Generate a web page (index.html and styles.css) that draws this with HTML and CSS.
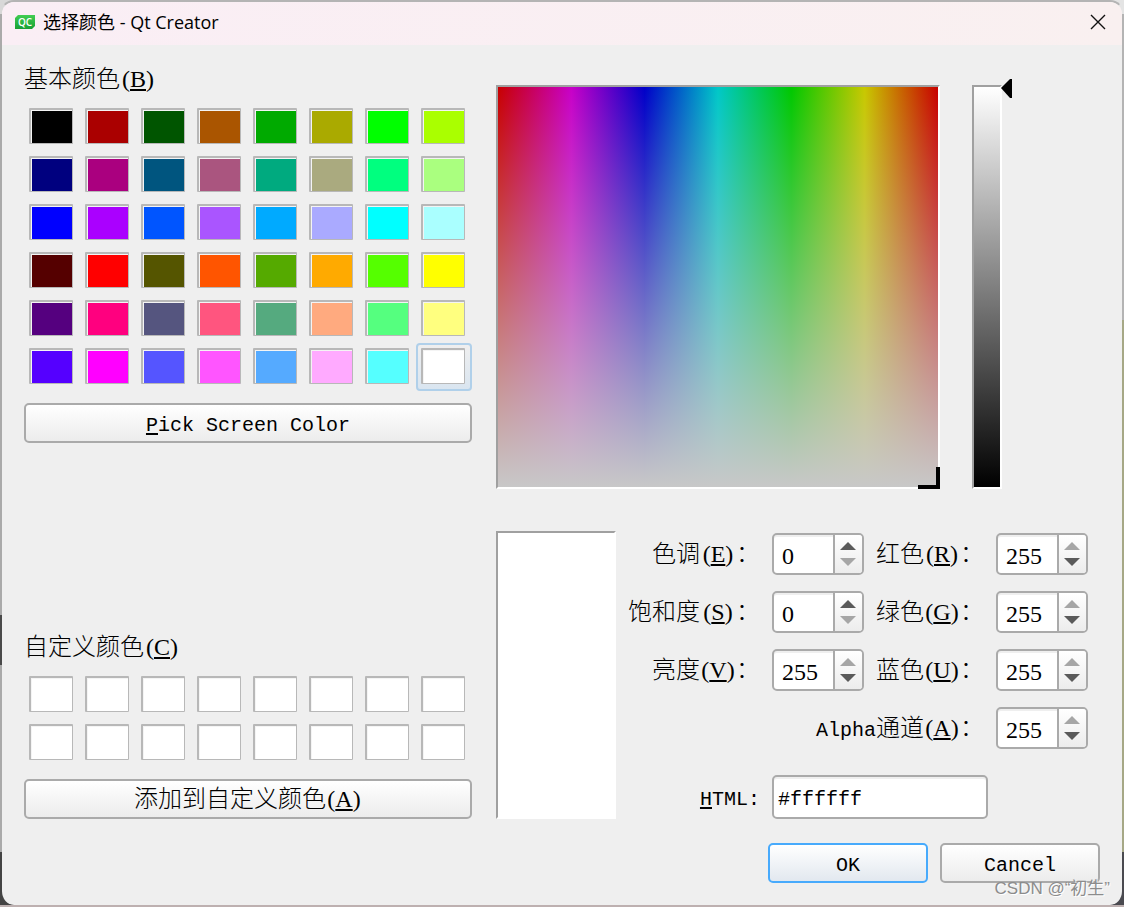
FILE: index.html
```
<!DOCTYPE html>
<html lang="zh-CN">
<head>
<meta charset="utf-8">
<title>选择颜色 - Qt Creator</title>
<link rel="stylesheet" href="styles.css">
</head>
<body>
<div class="dialog" role="dialog" aria-labelledby="dialog-title">
  <header class="titlebar">
    <svg class="app-icon" viewBox="0 0 20 14" aria-hidden="true">
      <defs><linearGradient id="g" x1="0" y1="0" x2="0" y2="1"><stop offset="0" stop-color="#41cd52"/><stop offset="1" stop-color="#17a035"/></linearGradient></defs>
      <path d="M3 0H20V11L17 14H0V3Z" fill="url(#g)"/>
      <text x="10" y="11" text-anchor="middle" class="app-icon-text">QC</text>
    </svg>
    <h1 class="title" id="dialog-title">选择颜色 - Qt Creator</h1>
    <button class="close" type="button" aria-label="Close">
      <svg viewBox="0 0 16 16" aria-hidden="true"><path d="M1 1L15 15M15 1L1 15" stroke="#111" stroke-width="1.4" fill="none"/></svg>
    </button>
  </header>
  <main class="content">
    <section class="palette">
      <h2 class="heading">基本颜色<span class="key">(<u>B</u>)</span></h2>
      <div class="swatches">
        <button class="cell" type="button" aria-label="#000000"><span class="swatch" style="background:#000000"></span></button>
        <button class="cell" type="button" aria-label="#aa0000"><span class="swatch" style="background:#aa0000"></span></button>
        <button class="cell" type="button" aria-label="#005500"><span class="swatch" style="background:#005500"></span></button>
        <button class="cell" type="button" aria-label="#aa5500"><span class="swatch" style="background:#aa5500"></span></button>
        <button class="cell" type="button" aria-label="#00aa00"><span class="swatch" style="background:#00aa00"></span></button>
        <button class="cell" type="button" aria-label="#aaaa00"><span class="swatch" style="background:#aaaa00"></span></button>
        <button class="cell" type="button" aria-label="#00ff00"><span class="swatch" style="background:#00ff00"></span></button>
        <button class="cell" type="button" aria-label="#aaff00"><span class="swatch" style="background:#aaff00"></span></button>
        <button class="cell" type="button" aria-label="#00007f"><span class="swatch" style="background:#00007f"></span></button>
        <button class="cell" type="button" aria-label="#aa007f"><span class="swatch" style="background:#aa007f"></span></button>
        <button class="cell" type="button" aria-label="#00557f"><span class="swatch" style="background:#00557f"></span></button>
        <button class="cell" type="button" aria-label="#aa557f"><span class="swatch" style="background:#aa557f"></span></button>
        <button class="cell" type="button" aria-label="#00aa7f"><span class="swatch" style="background:#00aa7f"></span></button>
        <button class="cell" type="button" aria-label="#aaaa7f"><span class="swatch" style="background:#aaaa7f"></span></button>
        <button class="cell" type="button" aria-label="#00ff7f"><span class="swatch" style="background:#00ff7f"></span></button>
        <button class="cell" type="button" aria-label="#aaff7f"><span class="swatch" style="background:#aaff7f"></span></button>
        <button class="cell" type="button" aria-label="#0000ff"><span class="swatch" style="background:#0000ff"></span></button>
        <button class="cell" type="button" aria-label="#aa00ff"><span class="swatch" style="background:#aa00ff"></span></button>
        <button class="cell" type="button" aria-label="#0055ff"><span class="swatch" style="background:#0055ff"></span></button>
        <button class="cell" type="button" aria-label="#aa55ff"><span class="swatch" style="background:#aa55ff"></span></button>
        <button class="cell" type="button" aria-label="#00aaff"><span class="swatch" style="background:#00aaff"></span></button>
        <button class="cell" type="button" aria-label="#aaaaff"><span class="swatch" style="background:#aaaaff"></span></button>
        <button class="cell" type="button" aria-label="#00ffff"><span class="swatch" style="background:#00ffff"></span></button>
        <button class="cell" type="button" aria-label="#aaffff"><span class="swatch" style="background:#aaffff"></span></button>
        <button class="cell" type="button" aria-label="#550000"><span class="swatch" style="background:#550000"></span></button>
        <button class="cell" type="button" aria-label="#ff0000"><span class="swatch" style="background:#ff0000"></span></button>
        <button class="cell" type="button" aria-label="#555500"><span class="swatch" style="background:#555500"></span></button>
        <button class="cell" type="button" aria-label="#ff5500"><span class="swatch" style="background:#ff5500"></span></button>
        <button class="cell" type="button" aria-label="#55aa00"><span class="swatch" style="background:#55aa00"></span></button>
        <button class="cell" type="button" aria-label="#ffaa00"><span class="swatch" style="background:#ffaa00"></span></button>
        <button class="cell" type="button" aria-label="#55ff00"><span class="swatch" style="background:#55ff00"></span></button>
        <button class="cell" type="button" aria-label="#ffff00"><span class="swatch" style="background:#ffff00"></span></button>
        <button class="cell" type="button" aria-label="#55007f"><span class="swatch" style="background:#55007f"></span></button>
        <button class="cell" type="button" aria-label="#ff007f"><span class="swatch" style="background:#ff007f"></span></button>
        <button class="cell" type="button" aria-label="#55557f"><span class="swatch" style="background:#55557f"></span></button>
        <button class="cell" type="button" aria-label="#ff557f"><span class="swatch" style="background:#ff557f"></span></button>
        <button class="cell" type="button" aria-label="#55aa7f"><span class="swatch" style="background:#55aa7f"></span></button>
        <button class="cell" type="button" aria-label="#ffaa7f"><span class="swatch" style="background:#ffaa7f"></span></button>
        <button class="cell" type="button" aria-label="#55ff7f"><span class="swatch" style="background:#55ff7f"></span></button>
        <button class="cell" type="button" aria-label="#ffff7f"><span class="swatch" style="background:#ffff7f"></span></button>
        <button class="cell" type="button" aria-label="#5500ff"><span class="swatch" style="background:#5500ff"></span></button>
        <button class="cell" type="button" aria-label="#ff00ff"><span class="swatch" style="background:#ff00ff"></span></button>
        <button class="cell" type="button" aria-label="#5555ff"><span class="swatch" style="background:#5555ff"></span></button>
        <button class="cell" type="button" aria-label="#ff55ff"><span class="swatch" style="background:#ff55ff"></span></button>
        <button class="cell" type="button" aria-label="#55aaff"><span class="swatch" style="background:#55aaff"></span></button>
        <button class="cell" type="button" aria-label="#ffaaff"><span class="swatch" style="background:#ffaaff"></span></button>
        <button class="cell" type="button" aria-label="#55ffff"><span class="swatch" style="background:#55ffff"></span></button>
        <button class="cell selected" type="button" aria-label="#ffffff" aria-pressed="true"><span class="swatch"></span></button>
      </div>
      <button class="push" type="button"><span class="latin"><u>P</u>ick Screen Color</span></button>
      <h2 class="heading custom">自定义颜色<span class="key">(<u>C</u>)</span></h2>
      <div class="swatches">
        <button class="cell" type="button" aria-label="Custom 1"><span class="swatch"></span></button>
        <button class="cell" type="button" aria-label="Custom 2"><span class="swatch"></span></button>
        <button class="cell" type="button" aria-label="Custom 3"><span class="swatch"></span></button>
        <button class="cell" type="button" aria-label="Custom 4"><span class="swatch"></span></button>
        <button class="cell" type="button" aria-label="Custom 5"><span class="swatch"></span></button>
        <button class="cell" type="button" aria-label="Custom 6"><span class="swatch"></span></button>
        <button class="cell" type="button" aria-label="Custom 7"><span class="swatch"></span></button>
        <button class="cell" type="button" aria-label="Custom 8"><span class="swatch"></span></button>
        <button class="cell" type="button" aria-label="Custom 9"><span class="swatch"></span></button>
        <button class="cell" type="button" aria-label="Custom 10"><span class="swatch"></span></button>
        <button class="cell" type="button" aria-label="Custom 11"><span class="swatch"></span></button>
        <button class="cell" type="button" aria-label="Custom 12"><span class="swatch"></span></button>
        <button class="cell" type="button" aria-label="Custom 13"><span class="swatch"></span></button>
        <button class="cell" type="button" aria-label="Custom 14"><span class="swatch"></span></button>
        <button class="cell" type="button" aria-label="Custom 15"><span class="swatch"></span></button>
        <button class="cell" type="button" aria-label="Custom 16"><span class="swatch"></span></button>
      </div>
      <button class="push" type="button">添加到自定义颜色<span class="key">(<u>A</u>)</span></button>
    </section>
    <section class="editor">
      <div class="pickers">
        <div class="spectrum sunken"><span class="crosshair"></span></div>
        <div class="value-bar sunken"><svg class="pointer" viewBox="0 0 11 19" aria-hidden="true"><path d="M11 0H9L0 9L9 19H11Z"/></svg></div>
      </div>
      <div class="details">
        <div class="preview sunken"></div>
        <form class="fields">
          <label class="label" for="hue">色调<span class="key">(<u>E</u>)</span>：</label>
          <div class="spin"><input id="hue" type="number" min="0" max="359" value="0"><div class="steps"><button type="button" aria-label="Increase"><svg viewBox="0 0 16 8"><path d="M0 8L8 0L16 8Z"/></svg></button><button class="dim" type="button" aria-label="Decrease"><svg viewBox="0 0 16 8"><path d="M0 0H16L8 8Z"/></svg></button></div></div>
          <label class="label" for="red">红色<span class="key">(<u>R</u>)</span>：</label>
          <div class="spin"><input id="red" type="number" min="0" max="255" value="255"><div class="steps"><button class="dim" type="button" aria-label="Increase"><svg viewBox="0 0 16 8"><path d="M0 8L8 0L16 8Z"/></svg></button><button type="button" aria-label="Decrease"><svg viewBox="0 0 16 8"><path d="M0 0H16L8 8Z"/></svg></button></div></div>
          <label class="label" for="sat">饱和度<span class="key">(<u>S</u>)</span>：</label>
          <div class="spin"><input id="sat" type="number" min="0" max="255" value="0"><div class="steps"><button type="button" aria-label="Increase"><svg viewBox="0 0 16 8"><path d="M0 8L8 0L16 8Z"/></svg></button><button class="dim" type="button" aria-label="Decrease"><svg viewBox="0 0 16 8"><path d="M0 0H16L8 8Z"/></svg></button></div></div>
          <label class="label" for="green">绿色<span class="key">(<u>G</u>)</span>：</label>
          <div class="spin"><input id="green" type="number" min="0" max="255" value="255"><div class="steps"><button class="dim" type="button" aria-label="Increase"><svg viewBox="0 0 16 8"><path d="M0 8L8 0L16 8Z"/></svg></button><button type="button" aria-label="Decrease"><svg viewBox="0 0 16 8"><path d="M0 0H16L8 8Z"/></svg></button></div></div>
          <label class="label" for="val">亮度<span class="key">(<u>V</u>)</span>：</label>
          <div class="spin"><input id="val" type="number" min="0" max="255" value="255"><div class="steps"><button class="dim" type="button" aria-label="Increase"><svg viewBox="0 0 16 8"><path d="M0 8L8 0L16 8Z"/></svg></button><button type="button" aria-label="Decrease"><svg viewBox="0 0 16 8"><path d="M0 0H16L8 8Z"/></svg></button></div></div>
          <label class="label" for="blue">蓝色<span class="key">(<u>U</u>)</span>：</label>
          <div class="spin"><input id="blue" type="number" min="0" max="255" value="255"><div class="steps"><button class="dim" type="button" aria-label="Increase"><svg viewBox="0 0 16 8"><path d="M0 8L8 0L16 8Z"/></svg></button><button type="button" aria-label="Decrease"><svg viewBox="0 0 16 8"><path d="M0 0H16L8 8Z"/></svg></button></div></div>
          <label class="label wide" for="alpha"><span class="latin">Alpha</span>通道<span class="key">(<u>A</u>)</span>：</label>
          <div class="spin"><input id="alpha" type="number" min="0" max="255" value="255"><div class="steps"><button class="dim" type="button" aria-label="Increase"><svg viewBox="0 0 16 8"><path d="M0 8L8 0L16 8Z"/></svg></button><button type="button" aria-label="Decrease"><svg viewBox="0 0 16 8"><path d="M0 0H16L8 8Z"/></svg></button></div></div>
          <label class="label last" for="html"><span class="latin"><u>H</u>TML:</span></label>
          <input class="hex last" id="html" type="text" value="#ffffff">
        </form>
      </div>
    </section>
  </main>
  <footer class="actions">
    <button class="push default" type="button"><span class="latin">OK</span></button>
    <button class="push" type="button"><span class="latin">Cancel</span></button>
  </footer>
</div>
<div class="watermark">CSDN @“初生”</div>
</body>
</html>
```

FILE: styles.css
```
* {
  box-sizing: border-box;
}

body {
  margin: 0;
  min-height: 100vh;
  display: flex;
  position: relative;
  padding-bottom: 2px;
  background:
    linear-gradient(#bdb0b0, #bdb0b0) bottom / 100% 2px no-repeat,
    linear-gradient(#d8d8d8 0 14px, #aaa 14px 615px, #4a4a4a 615px 665px, #aaa 665px 852px, #444 852px) left / 14px 100% no-repeat,
    linear-gradient(#e4e4e4 0 14px, #b4b4b4 14px 320px, #a6a886 320px 852px, #4a4a50 852px) right / 14px 100% no-repeat,
    #e4e4e4;
  color: #000;
  font-family: "Liberation Serif", "Noto Sans CJK SC", serif;
  font-size: 24px;
  font-weight: 300;
  line-height: 32px;
}

button,
input {
  margin: 0;
  padding: 0;
  border: 0;
  background: none;
  color: inherit;
  font: inherit;
}

svg {
  display: block;
}

.latin {
  font-family: "Liberation Mono", monospace;
  font-size: 20px;
}

.key {
  display: inline-block;
  min-width: 36px;
  text-align: center;
}

u {
  text-decoration-thickness: 2px;
  text-underline-offset: 2px;
}

.dialog {
  flex: 1;
  display: flex;
  flex-direction: column;
  border: 2px solid transparent;
  border-top-color: #b4b4b4;
  border-bottom: 0;
  border-radius: 14px;
  background: #efefef padding-box;
  overflow: hidden;
}

.titlebar {
  display: flex;
  align-items: center;
  height: 43px;
  padding: 0 16px 3px 13px;
  background: linear-gradient(90deg, #faeef5, #f9f0f0);
}

.app-icon {
  width: 20px;
  height: 14px;
}

.app-icon-text {
  font: 600 10px "Open Sans", sans-serif;
  fill: #fff;
}

.title {
  flex: 1;
  margin: 0 0 0 8px;
  font: 400 18px/24px "Open Sans", "Noto Sans CJK SC", sans-serif;
}

.close svg {
  width: 16px;
  height: 16px;
}

.content {
  display: grid;
  grid-template-columns: 448px 1fr;
  gap: 24px;
  padding: 18px 22px 0;
}

.palette {
  display: flex;
  flex-direction: column;
}

.heading {
  height: 32px;
  margin: 0 0 8px;
  font: inherit;
}

.custom {
  margin-top: auto;
}

.swatches {
  display: grid;
  grid-template-columns: repeat(8, 1fr);
  margin-bottom: 12px;
}

.cell {
  display: flex;
  height: 48px;
  padding: 3px;
  border: 2px solid transparent;
  border-radius: 4px;
}

.cell.selected {
  border-color: #b0d0ea;
  background: linear-gradient(#efefef, #d9e5f0);
}

.swatch {
  width: 44px;
  height: 36px;
  border: 1px solid #b8b8b8;
  border-width: 2px 1px 1px 2px;
  border-radius: 1px;
  background: #fff;
  box-shadow: inset 1px 1px #f4f4f4;
}

.push {
  height: 40px;
  border: 2px solid #aaa;
  border-radius: 5px;
  background: linear-gradient(#fff, #ececec);
  line-height: 36px;
}

.push.default {
  border-color: #47aafc;
  background: linear-gradient(#fff, #e2e8ef);
}

.editor {
  display: flex;
  flex-direction: column;
  gap: 42px;
  padding-top: 22px;
}

.sunken {
  border: 2px solid;
  border-color: #a0a0a0 #fff #fff #a0a0a0;
}

.pickers {
  display: flex;
  gap: 32px;
  height: 404px;
  padding-right: 98px;
}

.spectrum {
  position: relative;
  flex: 1;
  background:
    linear-gradient(rgba(200, 200, 200, 0), #c8c8c8),
    linear-gradient(90deg, #c80000, #c800c8, #0000c8, #00c8c8, #00c800, #c8c800, #c80000);
}

.crosshair {
  position: absolute;
  right: -2px;
  bottom: -2px;
  width: 22px;
  height: 22px;
  border: solid #000;
  border-width: 0 4px 4px 0;
}

.value-bar {
  position: relative;
  width: 30px;
  background: linear-gradient(#fff, #000);
}

.pointer {
  position: absolute;
  left: 27px;
  top: -8px;
  width: 11px;
  height: 19px;
}

.details {
  display: flex;
  gap: 12px;
  padding-right: 12px;
}

.preview {
  width: 120px;
  background: #fff;
}

.fields {
  flex: 1;
  display: grid;
  grid-template-columns: 1fr 92px 108px 92px;
  gap: 16px 12px;
  padding-top: 2px;
}

.label {
  align-self: center;
  height: 32px;
  text-align: right;
  white-space: nowrap;
}

.label.wide {
  grid-column: 1 / 4;
}

.last {
  margin-top: 10px;
}

.spin,
.hex {
  border: 2px solid #aaa;
  border-radius: 5px;
  background: #fff;
  box-shadow: inset 0 2px #efefef;
}

.spin {
  display: flex;
  height: 42px;
}

.spin input {
  flex: 1;
  min-width: 0;
  padding: 4px 0 0 8px;
  appearance: textfield;
}

.spin input::-webkit-inner-spin-button {
  appearance: none;
}

.steps {
  display: flex;
  flex-direction: column;
  justify-content: center;
  gap: 8px;
  width: 29px;
  padding-left: 5px;
  border-left: 2px solid #aaa;
  border-radius: 0 3px 3px 0;
  background: linear-gradient(#fff, #ececec);
}

.steps button {
  width: 16px;
  height: 8px;
  fill: #5a5a5a;
}

.steps .dim {
  fill: #a6a6a6;
}

.hex {
  grid-column: 2 / 5;
  width: 216px;
  height: 44px;
  padding: 4px 4px 0;
  font-family: "Liberation Mono", monospace;
  font-size: 20px;
}

.actions {
  display: flex;
  justify-content: flex-end;
  gap: 12px;
  padding: 24px 22px 22px;
}

.actions .push {
  width: 160px;
}

.watermark {
  position: absolute;
  right: 14px;
  bottom: 6px;
  color: #8c8c8c;
  font: 17px/24px "Liberation Sans", "Noto Sans CJK SC", sans-serif;
  text-shadow: 1px 1px #fff;
}
```
